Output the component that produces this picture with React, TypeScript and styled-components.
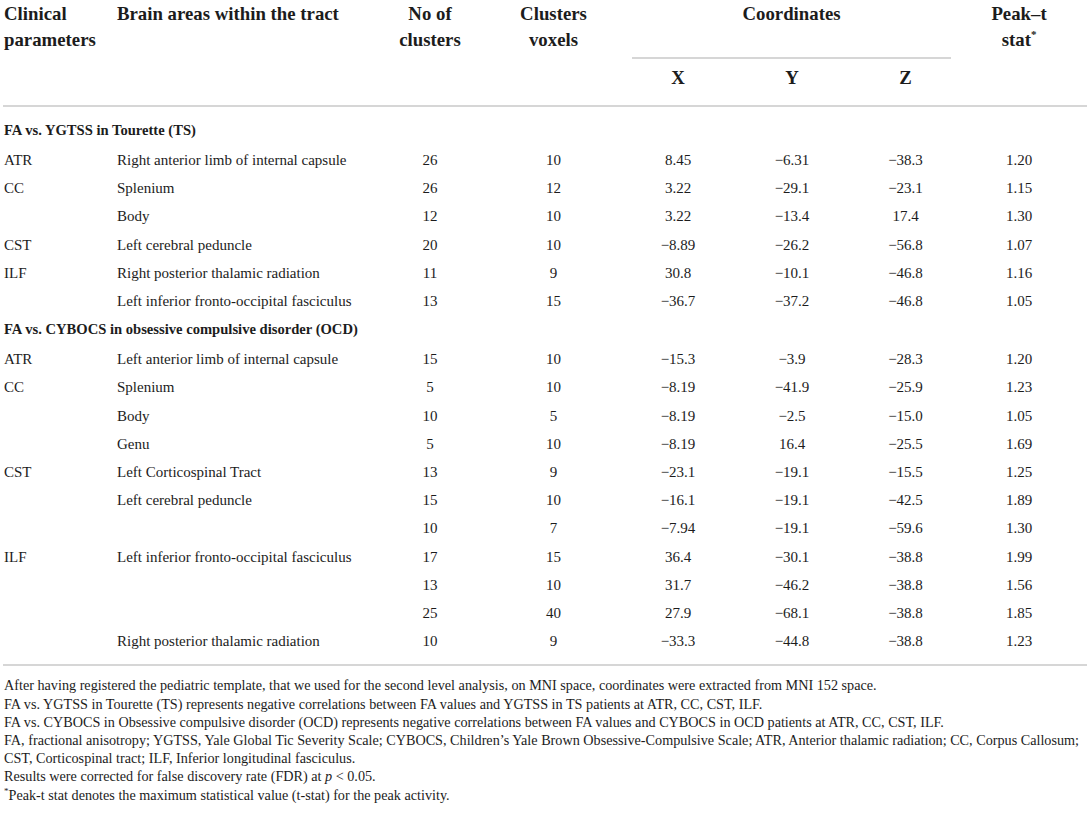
import styled, { createGlobalStyle } from 'styled-components';

const GlobalStyle = createGlobalStyle`
  html, body {
    margin: 0;
    padding: 0;
    background: #ffffff;
  }
  body {
    font-family: "Liberation Serif", "DejaVu Serif", serif;
    color: #1c1c1c;
  }
`;

const Page = styled.div`
  padding: 0 4px 0 3px;
  width: 1084px;
`;

const Table = styled.table`
  width: 1084px;
  border-collapse: collapse;
  table-layout: fixed;
  font-size: 15px;
`;

const Head = styled.thead`
  border-bottom: 2px solid #d6d6d6;
`;

const HeadRowTop = styled.tr`
  height: 58px;
`;

const HeadRowSub = styled.tr`
  height: 48px;
`;

const HeadCell = styled.th<{ $align?: 'left' | 'center'; $indent?: number }>`
  font-weight: 700;
  font-size: 18.8px;
  line-height: 26px;
  text-align: ${(p) => p.$align ?? 'center'};
  vertical-align: top;
  padding: 1px 0 0 ${(p) => p.$indent ?? 0}px;
`;

const GroupCell = styled.th`
  font-weight: 700;
  font-size: 18.8px;
  line-height: 26px;
  text-align: center;
  vertical-align: top;
  padding: 1px 0 0;
  border-bottom: 2px solid #d6d6d6;
`;

const AxisCell = styled.th`
  font-weight: 700;
  font-size: 18.8px;
  line-height: 26px;
  text-align: center;
  vertical-align: top;
  padding: 6px 0 0;
`;

const Body = styled.tbody`
  border-bottom: 2px solid #d6d6d6;

  tr:first-child td {
    padding-top: 9px;
  }
  tr:last-child td {
    padding-bottom: 9px;
  }
`;

const Row = styled.tr``;

const Cell = styled.td<{ $align?: 'left' | 'center'; $indent?: number }>`
  height: 28.2px;
  line-height: 28.2px;
  padding: 0 0 0 ${(p) => p.$indent ?? 0}px;
  text-align: ${(p) => p.$align ?? 'center'};
  vertical-align: top;
  white-space: nowrap;
`;

const SectionCell = styled.td`
  height: 28px;
  line-height: 28px;
  padding: 0 0 2px 1px;
  font-size: 14.6px;
  font-weight: 700;
  text-align: left;
  vertical-align: top;
  white-space: nowrap;
`;

const Star = styled.sup<{ $size?: number }>`
  font-size: ${(p) => p.$size ?? 10}px;
  vertical-align: 0.7em;
  line-height: 0;
`;

const Notes = styled.div`
  padding: 10px 0 0 1px;
  font-size: 14.2px;
  line-height: 18.2px;
`;

const Note = styled.p`
  margin: 0;
  white-space: nowrap;
`;

const Italic = styled.i``;

type DataRow = {
  param?: string;
  area?: string;
  n: string;
  voxels: string;
  x: string;
  y: string;
  z: string;
  peak: string;
};

type Section = { title: string; rows: DataRow[] };

const sections: Section[] = [
  {
    title: 'FA vs. YGTSS in Tourette (TS)',
    rows: [
      { param: 'ATR', area: 'Right anterior limb of internal capsule', n: '26', voxels: '10', x: '8.45', y: '−6.31', z: '−38.3', peak: '1.20' },
      { param: 'CC', area: 'Splenium', n: '26', voxels: '12', x: '3.22', y: '−29.1', z: '−23.1', peak: '1.15' },
      { area: 'Body', n: '12', voxels: '10', x: '3.22', y: '−13.4', z: '17.4', peak: '1.30' },
      { param: 'CST', area: 'Left cerebral peduncle', n: '20', voxels: '10', x: '−8.89', y: '−26.2', z: '−56.8', peak: '1.07' },
      { param: 'ILF', area: 'Right posterior thalamic radiation', n: '11', voxels: '9', x: '30.8', y: '−10.1', z: '−46.8', peak: '1.16' },
      { area: 'Left inferior fronto-occipital fasciculus', n: '13', voxels: '15', x: '−36.7', y: '−37.2', z: '−46.8', peak: '1.05' },
    ],
  },
  {
    title: 'FA vs. CYBOCS in obsessive compulsive disorder (OCD)',
    rows: [
      { param: 'ATR', area: 'Left anterior limb of internal capsule', n: '15', voxels: '10', x: '−15.3', y: '−3.9', z: '−28.3', peak: '1.20' },
      { param: 'CC', area: 'Splenium', n: '5', voxels: '10', x: '−8.19', y: '−41.9', z: '−25.9', peak: '1.23' },
      { area: 'Body', n: '10', voxels: '5', x: '−8.19', y: '−2.5', z: '−15.0', peak: '1.05' },
      { area: 'Genu', n: '5', voxels: '10', x: '−8.19', y: '16.4', z: '−25.5', peak: '1.69' },
      { param: 'CST', area: 'Left Corticospinal Tract', n: '13', voxels: '9', x: '−23.1', y: '−19.1', z: '−15.5', peak: '1.25' },
      { area: 'Left cerebral peduncle', n: '15', voxels: '10', x: '−16.1', y: '−19.1', z: '−42.5', peak: '1.89' },
      { n: '10', voxels: '7', x: '−7.94', y: '−19.1', z: '−59.6', peak: '1.30' },
      { param: 'ILF', area: 'Left inferior fronto-occipital fasciculus', n: '17', voxels: '15', x: '36.4', y: '−30.1', z: '−38.8', peak: '1.99' },
      { n: '13', voxels: '10', x: '31.7', y: '−46.2', z: '−38.8', peak: '1.56' },
      { n: '25', voxels: '40', x: '27.9', y: '−68.1', z: '−38.8', peak: '1.85' },
      { area: 'Right posterior thalamic radiation', n: '10', voxels: '9', x: '−33.3', y: '−44.8', z: '−38.8', peak: '1.23' },
    ],
  },
];

export default function App() {
  return (
    <Page>
      <GlobalStyle />
      <Table>
        <colgroup>
          <col style={{ width: 110 }} />
          <col style={{ width: 272 }} />
          <col style={{ width: 90 }} />
          <col style={{ width: 157 }} />
          <col style={{ width: 92 }} />
          <col style={{ width: 136 }} />
          <col style={{ width: 91 }} />
          <col style={{ width: 136 }} />
        </colgroup>
        <Head>
          <HeadRowTop>
            <HeadCell $align="left" $indent={1} rowSpan={2}>
              Clinical
              <br />
              parameters
            </HeadCell>
            <HeadCell $align="left" $indent={4} rowSpan={2}>
              Brain areas within the tract
            </HeadCell>
            <HeadCell rowSpan={2}>
              No of
              <br />
              clusters
            </HeadCell>
            <HeadCell rowSpan={2}>
              Clusters
              <br />
              voxels
            </HeadCell>
            <GroupCell colSpan={3}>Coordinates</GroupCell>
            <HeadCell rowSpan={2}>
              Peak–t
              <br />
              stat<Star $size={11}>*</Star>
            </HeadCell>
          </HeadRowTop>
          <HeadRowSub>
            <AxisCell>X</AxisCell>
            <AxisCell>Y</AxisCell>
            <AxisCell>Z</AxisCell>
          </HeadRowSub>
        </Head>
        <Body>
          {sections.flatMap((section) => [
            <Row key={section.title}>
              <SectionCell colSpan={8}>{section.title}</SectionCell>
            </Row>,
            ...section.rows.map((r, i) => (
              <Row key={`${section.title}-${i}`}>
                <Cell $align="left" $indent={1}>{r.param ?? ''}</Cell>
                <Cell $align="left" $indent={4}>{r.area ?? ''}</Cell>
                <Cell>{r.n}</Cell>
                <Cell>{r.voxels}</Cell>
                <Cell>{r.x}</Cell>
                <Cell>{r.y}</Cell>
                <Cell>{r.z}</Cell>
                <Cell>{r.peak}</Cell>
              </Row>
            )),
          ])}
        </Body>
      </Table>
      <Notes>
        <Note>
          After having registered the pediatric template, that we used for the second level analysis, on MNI space, coordinates were extracted from MNI 152 space.
        </Note>
        <Note>
          FA vs. YGTSS in Tourette (TS) represents negative correlations between FA values and YGTSS in TS patients at ATR, CC, CST, ILF.
        </Note>
        <Note>
          FA vs. CYBOCS in Obsessive compulsive disorder (OCD) represents negative correlations between FA values and CYBOCS in OCD patients at ATR, CC, CST, ILF.
        </Note>
        <Note>
          FA, fractional anisotropy; YGTSS, Yale Global Tic Severity Scale; CYBOCS, Children’s Yale Brown Obsessive-Compulsive Scale; ATR, Anterior thalamic radiation; CC, Corpus Callosum;
        </Note>
        <Note>CST, Corticospinal tract; ILF, Inferior longitudinal fasciculus.</Note>
        <Note>
          Results were corrected for false discovery rate (FDR) at <Italic>p</Italic> &lt; 0.05.
        </Note>
        <Note>
          <Star $size={9}>*</Star>Peak-t stat denotes the maximum statistical value (t-stat) for the peak activity.
        </Note>
      </Notes>
    </Page>
  );
}
